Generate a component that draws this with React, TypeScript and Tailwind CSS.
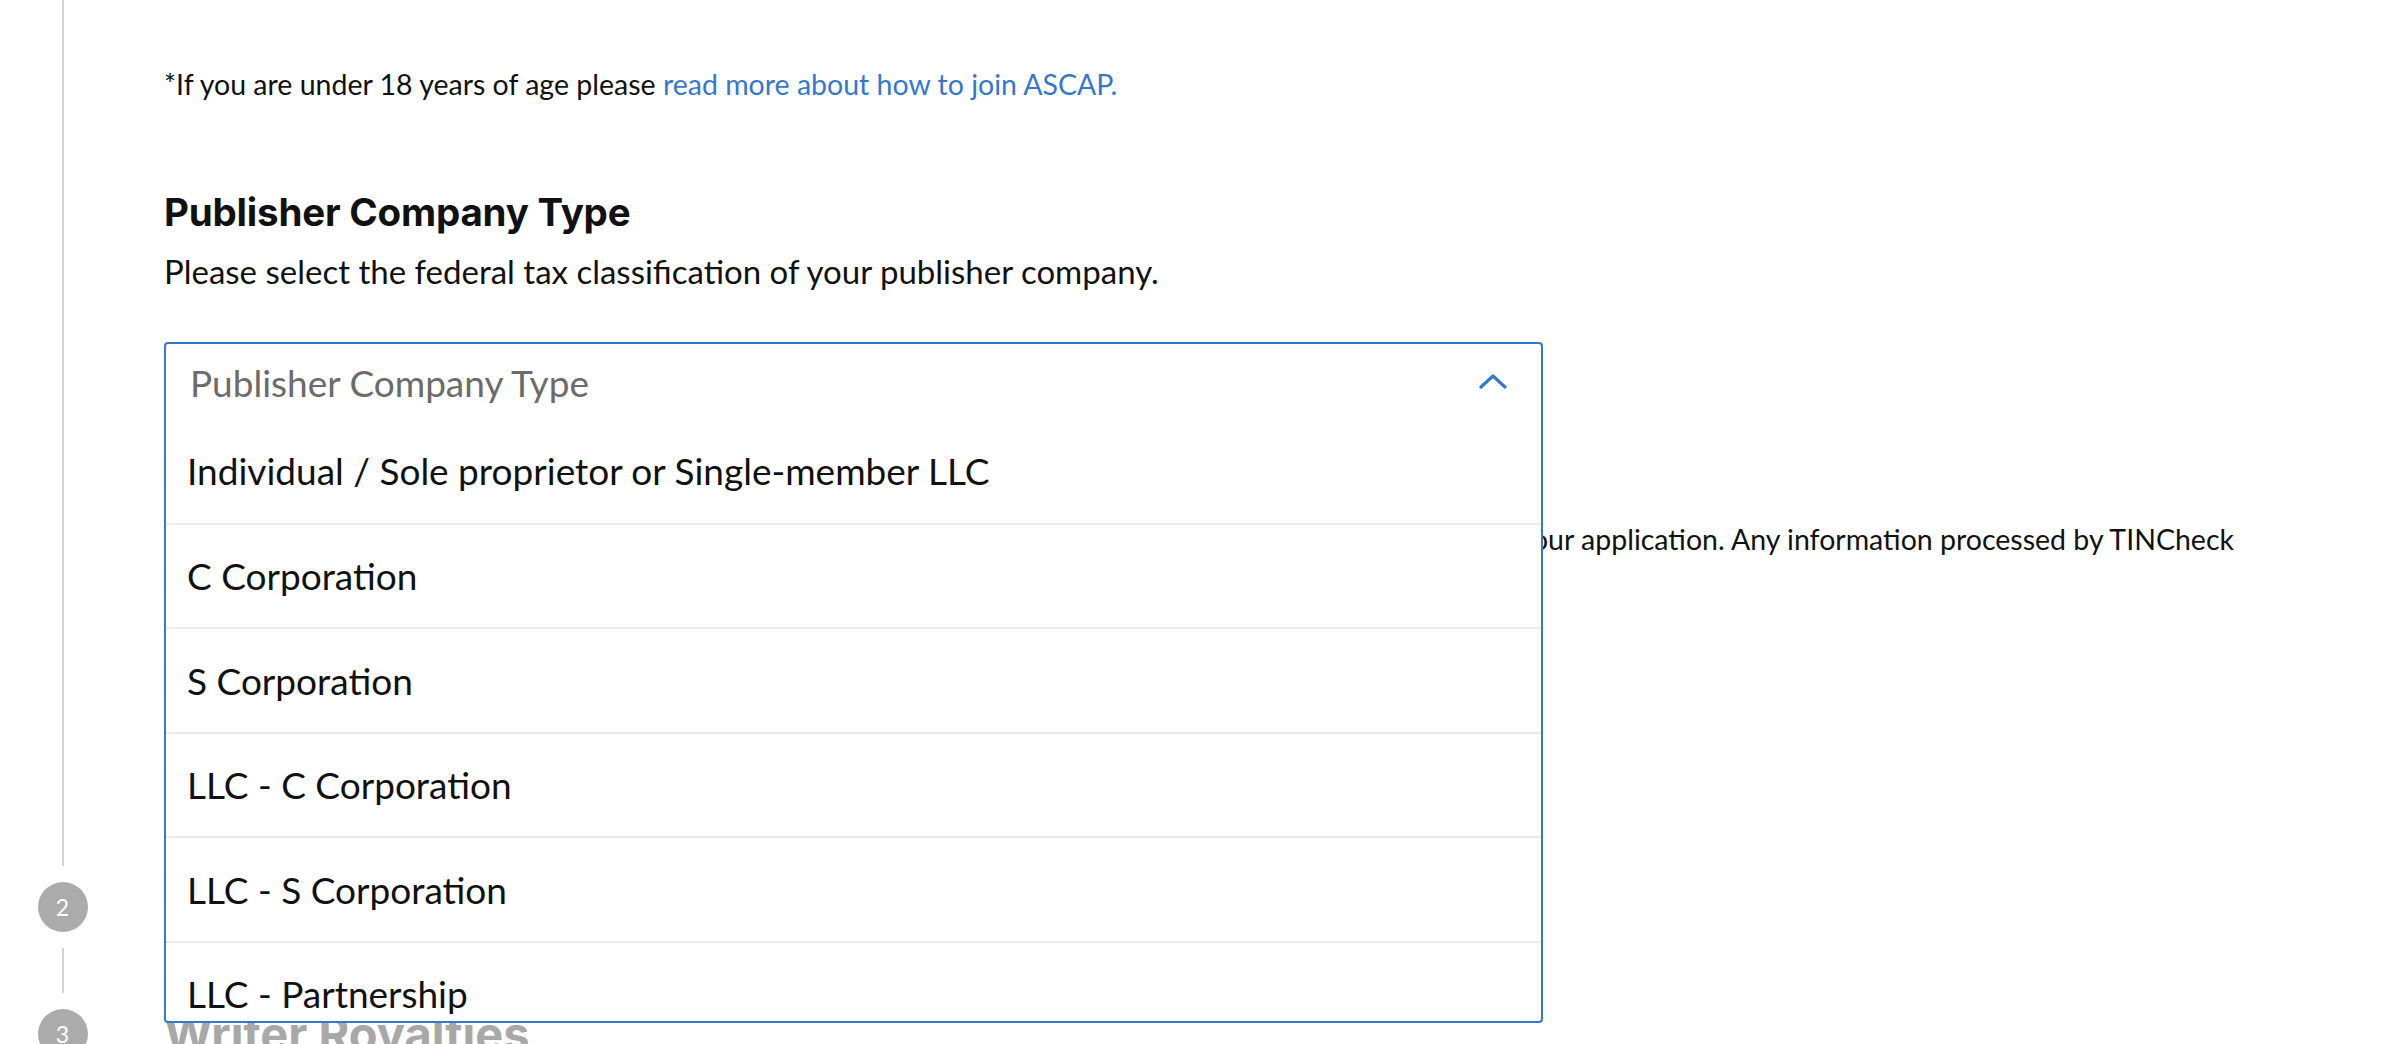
import { useState } from "react";

const companyTypes = [
  "Individual / Sole proprietor or Single-member LLC",
  "C Corporation",
  "S Corporation",
  "LLC - C Corporation",
  "LLC - S Corporation",
  "LLC - Partnership",
  "Partnership",
  "Trust / Estate",
  "Other",
];

function StepCircle({ n }: { n: number }) {
  return (
    <div className="flex size-[50px] shrink-0 items-center justify-center rounded-full bg-[#ababab] text-[23px] text-white">
      {n}
    </div>
  );
}

function CompanyTypeSelect() {
  const [open] = useState(true);

  return (
    <div className="relative w-[1379px]">
      <div className="flex h-[76px] items-center justify-between rounded-t-[4px] border-2 border-b-0 border-[#3677cc] pl-[24px] pr-[34px]">
        <span className="pt-[3px] text-[37px] text-[#6b6b6b]">Publisher Company Type</span>
        <svg width="28" height="16" viewBox="0 0 28 16" fill="none">
          <polyline points="2,14 14,3 26,14" stroke="#3677cc" strokeWidth="3.2" strokeLinecap="round" strokeLinejoin="round" />
        </svg>
      </div>
      {open && (
        <ul className="absolute left-0 right-0 top-full z-10 max-h-[605px] overflow-hidden rounded-b-[4px] border-2 border-t-0 border-[#3677cc] bg-white">
          {companyTypes.map((type, i) => (
            <li
              key={type}
              className={`flex h-[104.5px] items-center pl-[21px] text-[37px] text-[#111] ${i > 0 ? "border-t-2 border-[#ebebeb]" : ""}`}
            >
              {type}
            </li>
          ))}
        </ul>
      )}
    </div>
  );
}

export default function App() {
  return (
    <div className="h-[1044px] w-[2388px] overflow-hidden bg-white font-['Lato','Liberation_Sans',sans-serif] text-[#111]">
      {/* step 1 */}
      <div className="flex h-[882px]">
        <div className="flex w-[125px] shrink-0 flex-col items-center pb-4">
          <div className="w-[2px] flex-1 bg-[#d4d4d4]" />
        </div>
        <div className="ml-[39px] flex flex-col pt-[64px]">
          <p className="text-[28.5px] leading-[40px]">
            *If you are under 18 years of age please{" "}
            <a className="text-[#3677cc]">read more about how to join ASCAP.</a>
          </p>
          <h2 className="mt-[84px] font-['Inter',sans-serif] text-[38.5px] font-bold leading-[48px] tracking-[-0.2px]">
            Publisher Company Type
          </h2>
          <p className="mt-[13px] text-[33px] leading-[44px]">
            Please select the federal tax classification of your publisher company.
          </p>
          <div className="relative z-10 mt-[49px]">
            <CompanyTypeSelect />
          </div>
          <div className="mt-[101px] flex w-[2070px] justify-end">
            <p className="whitespace-nowrap text-[28.5px] leading-[40px]">
              This will be used to verify your tax ID during the review of your application. Any information processed by TINCheck
            </p>
          </div>
        </div>
      </div>

      {/* step 2 */}
      <div className="flex h-[127px]">
        <div className="flex w-[125px] shrink-0 flex-col items-center">
          <StepCircle n={2} />
          <div className="my-4 w-[2px] flex-1 bg-[#d4d4d4]" />
        </div>
        <div className="ml-[39px] flex h-[50px] items-center">
          <h2 className="font-['Inter',sans-serif] text-[47px] font-bold text-[#a8a8a8]">Publisher Royalties</h2>
        </div>
      </div>

      {/* step 3 */}
      <div className="flex">
        <div className="flex w-[125px] shrink-0 flex-col items-center">
          <StepCircle n={3} />
        </div>
        <div className="ml-[39px] flex h-[50px] items-center">
          <h2 className="font-['Inter',sans-serif] text-[47px] font-bold text-[#a8a8a8]">Writer Royalties</h2>
        </div>
      </div>
    </div>
  );
}
